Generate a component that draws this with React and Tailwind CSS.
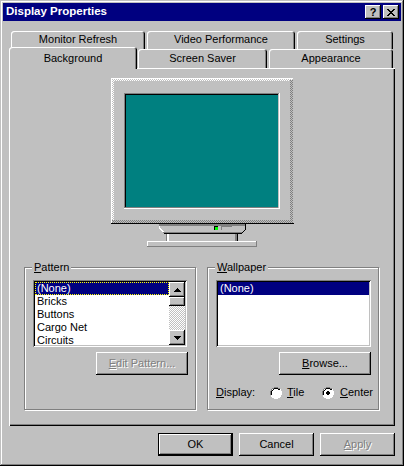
const raised = "bg-[#c0c0c0] shadow-[inset_-1px_-1px_0_#000,inset_1px_1px_0_#fff,inset_-2px_-2px_0_#808080]";
const sunken = "bg-white shadow-[inset_1px_1px_0_#808080,inset_-1px_-1px_0_#fff,inset_2px_2px_0_#000,inset_-2px_-2px_0_#c0c0c0]";
const tabEdge = "bg-[#c0c0c0] rounded-t-[3px] shadow-[inset_1px_1px_0_#fff,inset_-1px_0_0_#000,inset_-2px_0_0_#808080]";
const disabledText = "text-[#808080] [text-shadow:1px_1px_0_#fff]";

function Tab({ label, className }) {
  return (
    <div className={`flex items-center justify-center ${tabEdge} ${className}`}>
      {label}
    </div>
  );
}

function Monitor() {
  return (
    <svg width="184" height="170" viewBox="110 78 184 170" shapeRendering="crispEdges" className="block">
      <defs>
        <pattern id="ditherLight" width="2" height="2" patternUnits="userSpaceOnUse">
          <rect width="2" height="2" fill="#c0c0c0" />
          <rect width="1" height="1" fill="#fff" />
          <rect x="1" y="1" width="1" height="1" fill="#fff" />
        </pattern>
        <pattern id="ditherDark" width="2" height="2" patternUnits="userSpaceOnUse">
          <rect width="2" height="2" fill="#c0c0c0" />
          <rect width="1" height="1" fill="#808080" />
          <rect x="1" y="1" width="1" height="1" fill="#808080" />
        </pattern>
      </defs>
      {/* case */}
      <rect x="111" y="78" width="182" height="145" fill="#c0c0c0" />
      <rect x="111" y="78" width="182" height="1" fill="#fff" />
      <rect x="111" y="78" width="1" height="145" fill="#fff" />
      <rect x="112" y="79" width="180" height="2" fill="url(#ditherLight)" />
      <rect x="112" y="79" width="2" height="143" fill="url(#ditherLight)" />
      <rect x="290" y="80" width="3" height="142" fill="url(#ditherDark)" />
      <rect x="112" y="220" width="181" height="3" fill="url(#ditherDark)" />
      <rect x="111" y="223" width="183" height="1" fill="#000" />
      {/* screen */}
      <rect x="124" y="93" width="156" height="116" fill="#fff" />
      <rect x="124" y="93" width="155" height="115" fill="#808080" />
      <rect x="125" y="94" width="154" height="114" fill="#000" />
      <rect x="126" y="95" width="152" height="112" fill="#008080" />
      <rect x="125" y="207" width="153" height="1" fill="#808080" />
      <rect x="278" y="94" width="1" height="114" fill="#c0c0c0" />
      {/* base */}
      <path d="M159 224H246V229L241 233H165L159 229Z" fill="#c0c0c0" />
      <rect x="159" y="224" width="87" height="2" fill="#808080" />
      <rect x="159" y="226" width="1" height="3" fill="#fff" />
      <path d="M160 228h1v1h1v1h1v1h1v1h-2v-1h-1v-1h-1z" fill="#fff" />
      <rect x="245" y="224" width="1" height="5" fill="#000" />
      <path d="M245 229h1v1h-1v1h-1v1h-1v1h-1v-1h1v-1h1v-1h1z" fill="#000" />
      <rect x="163" y="232" width="79" height="1" fill="#808080" />
      <rect x="164" y="233" width="78" height="1" fill="#000" />
      <rect x="214" y="226" width="4" height="4" fill="#000" />
      <rect x="215" y="227" width="3" height="3" fill="#00ff00" />
      <rect x="221" y="226" width="11" height="4" fill="#808080" />
      <rect x="222" y="227" width="10" height="3" fill="#c0c0c0" />
      {/* neck */}
      <rect x="166" y="234" width="72" height="7" fill="#c0c0c0" />
      <rect x="166" y="234" width="2" height="7" fill="#808080" />
      <rect x="167" y="234" width="2" height="7" fill="#fff" />
      <rect x="235" y="234" width="2" height="7" fill="#808080" />
      <rect x="237" y="234" width="1" height="7" fill="#000" />
      {/* foot */}
      <rect x="147" y="241" width="110" height="6" fill="#808080" />
      <rect x="147" y="241" width="109" height="5" fill="#fff" />
      <rect x="148" y="242" width="108" height="4" fill="#c0c0c0" />
    </svg>
  );
}

function Arrow({ up }) {
  return (
    <svg width="7" height="4" viewBox="0 0 7 4" shapeRendering="crispEdges">
      <path d={up ? "M3 0h1v1h1v1h1v1h1v1H0V3h1V2h1V1h1z" : "M0 0h7v1H6v1H5v1H4v1H3V3H2V2H1V1H0z"} fill="#000" />
    </svg>
  );
}

function Radio({ checked }) {
  return (
    <svg width="12" height="12" viewBox="0 0 12 12" shapeRendering="crispEdges">
      <path d="M4 0h4v1h2v1h1v2h1v4h-1v2h-1v1H8v1H4v-1H2v-1H1V8H0V4h1V2h1V1h2z" fill="#fff" />
      <path d="M4 0h4v1h2v1H8V1H4v1H2v2H1v4H0V4h1V2h1V1h2z" fill="#808080" />
      <path d="M4 1h4v1h2v1H8V2H4v1H3v1H2v4H1V4h1V3h1V2h1z" fill="#000" />
      <path d="M4 2h4v1h1v1h1v4H9v1H8v1H4V9H3V8H2V4h1V3h1z" fill="#fff" />
      {checked && <path d="M5 4h2v1h1v2H7v1H5V7H4V5h1z" fill="#000" />}
    </svg>
  );
}

function GroupBox({ title, rest, children }) {
  return (
    <div className="relative w-[172px] h-[143px] border border-[#808080] shadow-[1px_1px_0_#fff,inset_1px_1px_0_#fff] pt-[12px] pl-[8px]">
      <div className="absolute -top-[7px] left-[7px] bg-[#c0c0c0] px-[2px] leading-[13px]">
        <u>{title}</u>{rest}
      </div>
      {children}
    </div>
  );
}

function Scrollbar() {
  return (
    <div className="flex flex-col w-[16px] h-[63px] bg-[repeating-conic-gradient(#fff_0_25%,#c0c0c0_0_50%)] bg-[length:2px_2px]">
      <div className={`h-[15px] flex items-center justify-center ${raised}`}><Arrow up /></div>
      <div className={`h-[9px] ${raised}`} />
      <div className="flex-1" />
      <div className={`h-[15px] flex items-center justify-center ${raised}`}><Arrow /></div>
    </div>
  );
}

function Button({ children, className }) {
  return (
    <div className={`flex items-center justify-center h-[23px] ${raised} ${className}`}>
      {children}
    </div>
  );
}

export default function App() {
  const patterns = ["Bricks", "Buttons", "Cargo Net", "Circuits"];

  return (
    <div className="w-[404px] h-[466px] bg-[#c0c0c0] p-[3px] overflow-hidden text-[11px] text-black font-['Liberation_Sans',sans-serif] shadow-[inset_-1px_-1px_0_#000,inset_1px_1px_0_#c0c0c0,inset_-2px_-2px_0_#808080,inset_2px_2px_0_#fff]">
      {/* title bar */}
      <div className="h-[18px] bg-[#000080] flex items-center justify-between pl-[3px] pr-[2px]">
        <span className="text-white font-bold text-[11.5px]">Display Properties</span>
        <div className="flex gap-[2px]">
          <div className={`w-[16px] h-[14px] flex items-center justify-center font-bold text-[11px] ${raised}`}>?</div>
          <div className={`w-[16px] h-[14px] flex items-center justify-center ${raised}`}>
            <svg width="8" height="7" viewBox="0 0 8 7" shapeRendering="crispEdges">
              <path d="M0 0h2v1h1v1h2V1h1V0h2v1H7v1H6v1H5v1h1v1h1v1h1v1H6V6H5V5H3v1H2v1H0V6h1V5h1V4h1V3H2V2H1V1H0z" fill="#000" />
            </svg>
          </div>
        </div>
      </div>

      {/* tabs */}
      <div className="flex gap-[2px] pl-[8px] mt-[10px]">
        <Tab label="Monitor Refresh" className="w-[134px] h-[18px] pb-[1px]" />
        <Tab label="Video Performance" className="w-[148px] h-[18px] pb-[1px]" />
        <Tab label="Settings" className="w-[96px] h-[18px] pb-[1px]" />
      </div>
      <div className="relative z-10 flex items-end -mt-[2px] pl-[6px] h-[21px]">
        <Tab label="Background" className="relative z-10 w-[128px] h-[22px] -mb-[1px] mr-[1px]" />
        <Tab label="Screen Saver" className="w-[129px] h-[19px] mr-[2px]" />
        <Tab label="Appearance" className="w-[124px] h-[19px]" />
      </div>

      {/* panel */}
      <div className="ml-[6px] w-[386px] h-[358px] pt-[10px] pl-[15px] bg-[#c0c0c0] shadow-[inset_1px_1px_0_#fff,inset_-1px_-1px_0_#000,inset_-2px_-2px_0_#808080]">
        <div className="flex justify-center pr-[15px] -ml-[1px]">
          <Monitor />
        </div>

        <div className="flex gap-[11px] mt-[19px]">
          <GroupBox title="P" rest="attern">
            <div className={`flex w-[154px] h-[67px] p-[2px] ${sunken}`}>
              <div className="flex-1 bg-white leading-[13px]">
                <div className="h-[13px] bg-[#000080] text-white pl-[2px] outline-1 -outline-offset-1 outline-dotted outline-[#ffff00]">(None)</div>
                {patterns.map((name) => (
                  <div key={name} className="h-[13px] pl-[2px]">{name}</div>
                ))}
              </div>
              <Scrollbar />
            </div>
            <Button className={`w-[92px] ml-[63px] mt-[5px] ${disabledText}`}>
              <span><u>E</u>dit Pattern...</span>
            </Button>
          </GroupBox>

          <GroupBox title="W" rest="allpaper">
            <div className={`w-[155px] h-[67px] p-[2px] ${sunken}`}>
              <div className="h-[13px] leading-[13px] bg-[#000080] text-white pl-[2px]">(None)</div>
            </div>
            <Button className="w-[92px] ml-[63px] mt-[5px]">
              <span><u>B</u>rowse...</span>
            </Button>
            <div className="flex items-center mt-[11px] h-[13px]">
              <span className="w-[54px]"><u>D</u>isplay:</span>
              <Radio />
              <span className="ml-[5px] w-[35px]"><u>T</u>ile</span>
              <Radio checked />
              <span className="ml-[6px]"><u>C</u>enter</span>
            </div>
          </GroupBox>
        </div>
      </div>

      {/* bottom buttons */}
      <div className="flex gap-[6px] pl-[155px] mt-[7px]">
        <Button className="w-[75px] outline-1 -outline-offset-1 outline-black shadow-[inset_-2px_-2px_0_#000,inset_2px_2px_0_#fff,inset_-3px_-3px_0_#808080]">OK</Button>
        <Button className="w-[75px]">Cancel</Button>
        <Button className={`w-[75px] ${disabledText}`}>
          <span><u>A</u>pply</span>
        </Button>
      </div>
    </div>
  );
}
